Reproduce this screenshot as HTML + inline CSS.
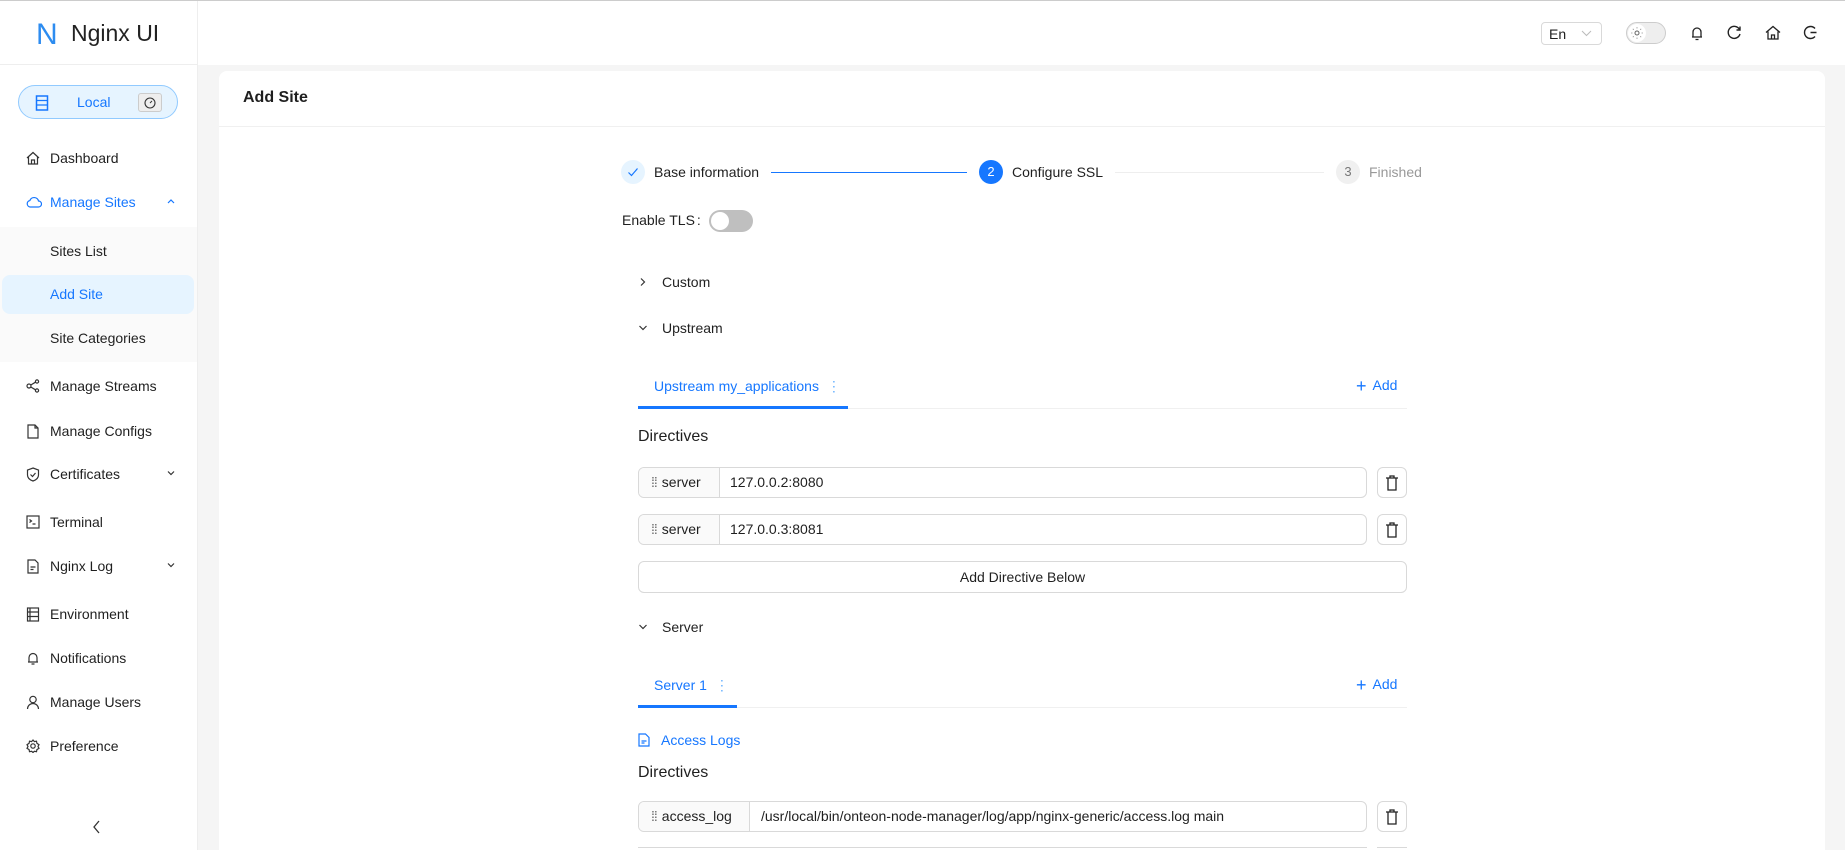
<!DOCTYPE html>
<html style="overflow:hidden;width:1845px;height:850px"><head><meta charset="utf-8"><style>
*{box-sizing:border-box;margin:0;padding:0}
body{width:1845px;height:850px;overflow:hidden;background:#f5f5f5;font-family:"Liberation Sans",sans-serif;font-size:14px;color:rgba(0,0,0,.88);position:relative}
.a{position:absolute}
.side{left:0;top:0;width:198px;height:850px;background:#fff;border-right:1px solid #eee}
.top{left:198px;top:0;width:1647px;height:65px;background:#fff}
.mi{position:absolute;left:0;width:198px;height:40px;line-height:40px}
.mi .t{position:absolute;left:50px}
.mi svg{position:absolute;left:26px;top:13px}
.mi .ch{position:absolute;left:166px;top:14px}
.blue{color:#1677ff}
.card{left:219px;top:71px;width:1606px;height:779px;background:#fff;border-radius:8px 8px 0 0}
.row{position:absolute;left:638px;width:729px;height:31px;border:1px solid #d9d9d9;border-radius:6px;overflow:hidden;background:#fff}
.row .pre{position:absolute;left:0;top:0;height:29px;background:#fafafa;border-right:1px solid #d9d9d9;line-height:29px;padding-left:12px}
.row .val{position:absolute;top:0;line-height:29px}
.trash{position:absolute;left:1377px;width:30px;height:31px;border:1px solid #d9d9d9;border-radius:6px;background:#fff}
.trash svg{position:absolute;left:7px;top:7px}
.dots{display:inline-block;color:#666;margin-right:5px;letter-spacing:-1px}
</style></head><body>
<div class="a" style="left:0;top:0;width:1845px;height:1px;background:#ccc;z-index:5"></div>
<div class="a side">
 <div class="a" style="left:0;top:64px;width:198px;height:1px;background:#eee"></div>
 <div class="a" style="left:36px;top:18px;font-size:30px;color:#2d8cf0;font-weight:300">N</div>
 <div class="a" style="left:71px;top:20px;font-size:23px;color:#222">Nginx UI</div>
 <div class="a" style="left:18px;top:85px;width:160px;height:34px;border:1px solid #91caff;border-radius:17px;background:#e6f4ff">
  <svg class="a" style="left:16px;top:9px" width="14" height="16" viewBox="0 0 14 16"><rect x="1.5" y="1" width="11" height="14" fill="none" stroke="#1677ff" stroke-width="1.5"/><path d="M1.5 5.5h11M1.5 10h11" stroke="#1677ff" stroke-width="1.3"/></svg>
  <span class="a blue" style="left:58px;top:8px">Local</span>
  <div class="a" style="left:119px;top:7px;width:24px;height:19px;border:1px solid #ccc;border-radius:3px;background:#eee"><svg class="a" style="left:5px;top:3px" width="12" height="12" viewBox="0 0 12 12"><circle cx="6" cy="6" r="5" fill="none" stroke="#333" stroke-width="1.1"/><path d="M6 6l2-2" stroke="#333"/></svg></div>
 </div>
 <div class="mi" style="top:138px"><svg width="14" height="14" viewBox="0 0 14 14" fill="none" stroke="#333" stroke-width="1.2"><path d="M1 7L7 1.5 13 7M2.5 6v7h9V6M5.5 13V9h3v4"/></svg><span class="t">Dashboard</span></div>
 <div class="mi blue" style="top:182px"><svg width="16" height="14" viewBox="0 0 16 14" fill="none" stroke="#1677ff" stroke-width="1.2"><path d="M4 12h8.5a3 3 0 000-6 4.5 4.5 0 00-8.6-.5A3.3 3.3 0 004 12z"/></svg><span class="t">Manage Sites</span><svg class="ch" width="10" height="10" viewBox="0 0 10 10"><path d="M2 7l3-3 3 3" fill="none" stroke="#1677ff" stroke-width="1.2"/></svg></div>
 <div class="a" style="left:0;top:227px;width:197px;height:135px;background:#fafafa"></div>
 <div class="mi" style="top:231px"><span class="t">Sites List</span></div>
 <div class="a" style="left:2px;top:275px;width:192px;height:39px;background:#e6f4ff;border-radius:8px"></div>
 <div class="mi blue" style="top:274px"><span class="t">Add Site</span></div>
 <div class="mi" style="top:318px"><span class="t">Site Categories</span></div>
 <div class="mi" style="top:366px"><svg width="14" height="14" viewBox="0 0 14 14" fill="none" stroke="#333" stroke-width="1.2"><circle cx="3" cy="7" r="2"/><circle cx="11" cy="2.5" r="1.6"/><circle cx="11" cy="11.5" r="1.6"/><path d="M4.8 6l4.7-2.8M4.8 8l4.7 2.8"/></svg><span class="t">Manage Streams</span></div>
 <div class="mi" style="top:411px"><svg width="14" height="15" viewBox="0 0 14 15" fill="none" stroke="#333" stroke-width="1.2"><path d="M2 1h7l3 3v10H2zM9 1v3h3"/></svg><span class="t">Manage Configs</span></div>
 <div class="mi" style="top:454px"><svg width="14" height="15" viewBox="0 0 14 15" fill="none" stroke="#333" stroke-width="1.2"><path d="M7 1l5.5 2v5c0 3-2.5 5-5.5 6-3-1-5.5-3-5.5-6V3z M4.5 7.5l2 2 3-3.5"/></svg><span class="t">Certificates</span><svg class="ch" width="10" height="10" viewBox="0 0 10 10"><path d="M2 3.5l3 3 3-3" fill="none" stroke="#333" stroke-width="1.2"/></svg></div>
 <div class="mi" style="top:502px"><svg width="14" height="14" viewBox="0 0 14 14" fill="none" stroke="#333" stroke-width="1.2"><rect x="1" y="1" width="12" height="12"/><path d="M3.5 4.5l2 1.5-2 1.5M6.5 9h3"/></svg><span class="t">Terminal</span></div>
 <div class="mi" style="top:546px"><svg width="14" height="15" viewBox="0 0 14 15" fill="none" stroke="#333" stroke-width="1.2"><path d="M2 1h7l3 3v10H2zM4.5 8h5M4.5 10.5h3"/></svg><span class="t">Nginx Log</span><svg class="ch" width="10" height="10" viewBox="0 0 10 10"><path d="M2 3.5l3 3 3-3" fill="none" stroke="#333" stroke-width="1.2"/></svg></div>
 <div class="mi" style="top:594px"><svg width="14" height="15" viewBox="0 0 14 15" fill="none" stroke="#333" stroke-width="1.2"><rect x="1.5" y="1" width="11" height="13"/><path d="M1.5 5h11M1.5 9.5h11M4 1v13"/></svg><span class="t">Environment</span></div>
 <div class="mi" style="top:638px"><svg width="14" height="15" viewBox="0 0 14 15" fill="none" stroke="#333" stroke-width="1.2"><path d="M3 11V6.5a4 4 0 018 0V11H2h10M5.5 13h3"/></svg><span class="t">Notifications</span></div>
 <div class="mi" style="top:682px"><svg width="14" height="15" viewBox="0 0 14 15" fill="none" stroke="#333" stroke-width="1.2"><circle cx="7" cy="4.5" r="3.2"/><path d="M1.5 14a5.5 5.5 0 0111 0"/></svg><span class="t">Manage Users</span></div>
 <div class="mi" style="top:726px"><svg width="14" height="14" viewBox="0 0 14 14" fill="none" stroke="#333" stroke-width="1.2"><circle cx="7" cy="7" r="2.2"/><path d="M7 1l1.4 1.6 2.1-.4.4 2.1L13 5.7 12 7.5l1 1.8-2.1 1.3-.4 2.1-2.1-.4L7 13.5 5.6 12.3l-2.1.4-.4-2.1L1 9.3 2 7.5 1 5.7l2.1-1.4.4-2.1 2.1.4z"/></svg><span class="t">Preference</span></div>
 <svg class="a" style="left:92px;top:820px" width="10" height="14" viewBox="0 0 10 14"><path d="M7 1L2 7l5 6" fill="none" stroke="#333" stroke-width="1.3"/></svg>
</div>
<div class="a top">
 <div class="a" style="left:1343px;top:22px;width:61px;height:23px;border:1px solid #d9d9d9;border-radius:4px"><span class="a" style="left:7px;top:3px">En</span><svg class="a" style="left:39px;top:6px" width="11" height="9" viewBox="0 0 11 9"><path d="M1 2l4.5 4.5L10 2" fill="none" stroke="#bbb"/></svg></div>
 <div class="a" style="left:1428px;top:22px;width:40px;height:22px;border:1px solid #ccc;border-radius:11px;background:#eee"><div class="a" style="left:1px;top:1px;width:18px;height:18px;border-radius:9px;background:#fff"></div><svg class="a" style="left:4px;top:4px" width="12" height="12" viewBox="0 0 12 12"><circle cx="6" cy="6" r="2" fill="none" stroke="#666"/><path d="M6 0v1.5M6 10.5V12M0 6h1.5M10.5 6H12M1.8 1.8l1 1M9.2 9.2l1 1M1.8 10.2l1-1M9.2 2.8l1-1" stroke="#999" stroke-width=".8"/></svg></div>
 <svg class="a" style="left:1492px;top:25px" width="14" height="16" viewBox="0 0 14 16" fill="none" stroke="#222" stroke-width="1.3"><path d="M3 12V7a4 4 0 018 0v5H2h10M5.5 14.5h3"/></svg>
 <svg class="a" style="left:1529px;top:25px" width="15" height="15" viewBox="0 0 15 15" fill="none" stroke="#222" stroke-width="1.4"><path d="M12.5 4.5A6 6 0 1013 9M13 1.5v3.5H9.5"/></svg>
 <svg class="a" style="left:1567px;top:25px" width="16" height="15" viewBox="0 0 16 15" fill="none" stroke="#222" stroke-width="1.3"><path d="M1 7.5L8 1.5l7 6M3 6.5V14h10V6.5M6.5 14v-4h3v4"/></svg>
 <svg class="a" style="left:1605px;top:25px" width="15" height="15" viewBox="0 0 15 15" fill="none" stroke="#222" stroke-width="1.4"><path d="M12 3.5A6 6 0 1012 11.5M7.5 7.5h6"/></svg>
</div>
<div class="a card">
 <div class="a" style="left:24px;top:18px;font-size:16px;font-weight:bold">Add Site</div>
 <div class="a" style="left:0;top:55px;width:1606px;height:1px;background:#f0f0f0"></div>
</div>
<div class="a" style="left:621px;top:160px;width:24px;height:24px;border-radius:12px;background:#e6f4ff"><svg class="a" style="left:6px;top:6px" width="12" height="12" viewBox="0 0 12 12"><path d="M1.5 6.5l3 3 6-7" fill="none" stroke="#1677ff" stroke-width="1.2"/></svg></div>
<div class="a" style="left:654px;top:164px">Base information</div>
<div class="a" style="left:771px;top:172px;width:196px;height:1px;background:#1677ff"></div>
<div class="a" style="left:979px;top:160px;width:24px;height:24px;border-radius:12px;background:#1677ff;color:#fff;text-align:center;line-height:24px;font-size:13px">2</div>
<div class="a" style="left:1012px;top:164px">Configure SSL</div>
<div class="a" style="left:1115px;top:172px;width:209px;height:1px;background:#eee"></div>
<div class="a" style="left:1336px;top:160px;width:24px;height:24px;border-radius:12px;background:#f0f0f0;color:#777;text-align:center;line-height:24px;font-size:13px">3</div>
<div class="a" style="left:1369px;top:164px;color:#999">Finished</div>
<div class="a" style="left:622px;top:212px">Enable TLS<span style="margin-left:2px">:</span></div>
<div class="a" style="left:709px;top:210px;width:44px;height:22px;border-radius:11px;background:#bfbfbf"><div class="a" style="left:2px;top:2px;width:18px;height:18px;border-radius:9px;background:#fff"></div></div>
<svg class="a" style="left:638px;top:277px" width="10" height="10" viewBox="0 0 10 10"><path d="M3 1.5l3.5 3.5L3 8.5" fill="none" stroke="#333" stroke-width="1.2"/></svg>
<div class="a" style="left:662px;top:274px">Custom</div>
<svg class="a" style="left:638px;top:323px" width="10" height="10" viewBox="0 0 10 10"><path d="M1.5 3l3.5 3.5L8.5 3" fill="none" stroke="#333" stroke-width="1.2"/></svg>
<div class="a" style="left:662px;top:320px">Upstream</div>
<div class="a blue" style="left:654px;top:378px">Upstream my_applications <span style="color:#69b1ff;margin-left:4px">⋮</span></div>
<div class="a blue" style="left:1356px;top:376px"><span style="font-size:18px;margin-right:6px">+</span><span style="position:relative;top:-2px">Add</span></div>
<div class="a" style="left:638px;top:408px;width:769px;height:1px;background:#f0f0f0"></div>
<div class="a" style="left:638px;top:406px;width:210px;height:3px;background:#1677ff"></div>
<div class="a" style="left:638px;top:428px;font-size:16px">Directives</div>
<div class="row" style="top:467px"><div class="pre" style="width:81px"><span class="dots">⁞⁞</span>server</div><div class="val" style="left:91px">127.0.0.2:8080</div></div>
<div class="trash" style="top:467px"><svg width="14" height="16" viewBox="0 0 14 16" fill="none" stroke="#222" stroke-width="1.3"><path d="M1 3h12M5 3V1h4v2M3 3v12h8V3"/></svg></div>
<div class="row" style="top:514px"><div class="pre" style="width:81px"><span class="dots">⁞⁞</span>server</div><div class="val" style="left:91px">127.0.0.3:8081</div></div>
<div class="trash" style="top:514px"><svg width="14" height="16" viewBox="0 0 14 16" fill="none" stroke="#222" stroke-width="1.3"><path d="M1 3h12M5 3V1h4v2M3 3v12h8V3"/></svg></div>
<div class="a" style="left:638px;top:561px;width:769px;height:32px;border:1px solid #d9d9d9;border-radius:6px;text-align:center;line-height:30px">Add Directive Below</div>
<svg class="a" style="left:638px;top:622px" width="10" height="10" viewBox="0 0 10 10"><path d="M1.5 3l3.5 3.5L8.5 3" fill="none" stroke="#333" stroke-width="1.2"/></svg>
<div class="a" style="left:662px;top:619px">Server</div>
<div class="a blue" style="left:654px;top:677px">Server 1 <span style="color:#69b1ff;margin-left:4px">⋮</span></div>
<div class="a blue" style="left:1356px;top:675px"><span style="font-size:18px;margin-right:6px">+</span><span style="position:relative;top:-2px">Add</span></div>
<div class="a" style="left:638px;top:707px;width:769px;height:1px;background:#f0f0f0"></div>
<div class="a" style="left:638px;top:705px;width:99px;height:3px;background:#1677ff"></div>
<svg class="a" style="left:638px;top:733px" width="12" height="14" viewBox="0 0 12 14" fill="none" stroke="#1677ff" stroke-width="1.2"><path d="M1 1h6.5L11 4.5V13H1zM3.5 8h5M3.5 10h3"/></svg>
<div class="a blue" style="left:661px;top:732px">Access Logs</div>
<div class="a" style="left:638px;top:764px;font-size:16px">Directives</div>
<div class="row" style="top:801px"><div class="pre" style="width:111px"><span class="dots">⁞⁞</span>access_log</div><div class="val" style="left:122px">/usr/local/bin/onteon-node-manager/log/app/nginx-generic/access.log main</div></div>
<div class="trash" style="top:801px"><svg width="14" height="16" viewBox="0 0 14 16" fill="none" stroke="#222" stroke-width="1.3"><path d="M1 3h12M5 3V1h4v2M3 3v12h8V3"/></svg></div>
<div class="a" style="left:638px;top:847px;width:729px;height:3px;border-top:1px solid #d9d9d9"></div>
<div class="a" style="left:1377px;top:847px;width:30px;height:3px;border-top:1px solid #d9d9d9"></div>
</body></html>
